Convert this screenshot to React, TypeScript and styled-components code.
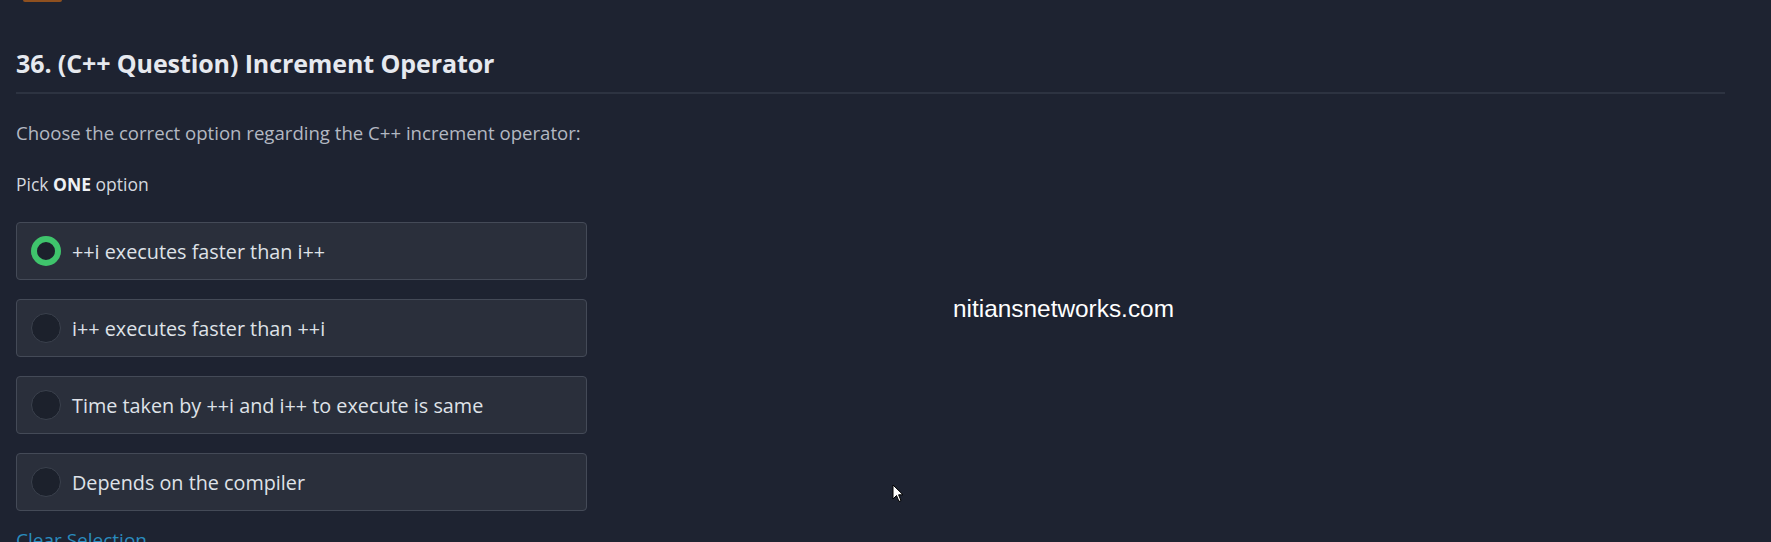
import React from "react";
import styled, { createGlobalStyle } from "styled-components";

const Global = createGlobalStyle`
  html, body {
    margin: 0;
    padding: 0;
    background: #1e2331;
    width: 1771px;
    height: 542px;
    overflow: hidden;
  }
  * { box-sizing: border-box; }
`;

const Page = styled.main`
  position: relative;
  width: 1771px;
  height: 542px;
  background: #1e2331;
  font-family: "Open Sans", "Noto Sans", sans-serif;
  padding: 0 46px 0 16px;
  display: flex;
  flex-direction: column;
  overflow: hidden;
`;

const TopBadge = styled.div`
  flex: none;
  width: 39px;
  height: 2px;
  margin-left: 7px;
  background: #8f501f;
  border-radius: 0 0 6px 6px;
`;

const Title = styled.h1`
  margin: 45px 0 0;
  font-size: 25px;
  line-height: 32px;
  font-weight: 700;
  color: #e6e9ef;
  letter-spacing: -0.1px;
`;

const Divider = styled.div`
  flex: none;
  margin-top: 13px;
  height: 2px;
  background: #2d3341;
`;

const Prompt = styled.p`
  margin: 27px 0 0;
  font-size: 18.6px;
  line-height: 24px;
  color: #b3b8c2;
`;

const Hint = styled.p`
  margin: 28px 0 0;
  font-size: 17.5px;
  line-height: 22px;
  color: #d4d8df;
  b { font-weight: 700; color: #eef0f4; }
`;

const Options = styled.div`
  margin-top: 27px;
  width: 571px;
  display: flex;
  flex-direction: column;
  gap: 19px;
`;

const Option = styled.label`
  height: 58px;
  display: flex;
  align-items: center;
  gap: 11px;
  padding-left: 14px;
  background: #2a2f3b;
  border: 1.5px solid #444a57;
  border-radius: 4px;
  color: #dfe2e8;
  font-size: 19.8px;
  cursor: pointer;
`;

const Radio = styled.span<{ $checked: boolean }>`
  width: 30px;
  height: 30px;
  border-radius: 50%;
  flex: none;
  background: #1c212c;
  border: ${(p) => (p.$checked ? "6.5px solid #3fc46c" : "1.5px solid #3b414d")};
`;

const Clear = styled.a`
  margin-top: 17px;
  font-size: 19px;
  line-height: 24px;
  color: #2a8cbf;
  text-decoration: none;
`;

const Watermark = styled.div`
  position: absolute;
  left: 953px;
  top: 295px;
  font-family: "Liberation Sans", Arial, sans-serif;
  font-size: 24.4px;
  line-height: 28px;
  color: #ffffff;
`;

const Cursor = styled.svg`
  position: absolute;
  left: 892px;
  top: 484px;
`;

const options = [
  "++i executes faster than i++",
  "i++ executes faster than ++i",
  "Time taken by ++i and i++ to execute is same",
  "Depends on the compiler",
];

export default function App() {
  return (
    <>
      <Global />
      <Page>
        <TopBadge />
        <Title>36. (C++ Question) Increment Operator</Title>
        <Divider />
        <Prompt>Choose the correct option regarding the C++ increment operator:</Prompt>
        <Hint>
          Pick <b>ONE</b> option
        </Hint>
        <Options>
          {options.map((o, i) => (
            <Option key={o}>
              <Radio $checked={i === 0} />
              {o}
            </Option>
          ))}
        </Options>
        <Clear href="#">Clear Selection</Clear>
        <Watermark>nitiansnetworks.com</Watermark>
        <Cursor width="12" height="19" viewBox="0 0 12 19">
          <path d="M1 1 L1 15 L4.5 11.5 L7 17.5 L9 16.6 L6.6 10.8 L11 10.8 Z" fill="#ffffff" stroke="#000000" strokeWidth="1" strokeLinejoin="round" />
        </Cursor>
      </Page>
    </>
  );
}
